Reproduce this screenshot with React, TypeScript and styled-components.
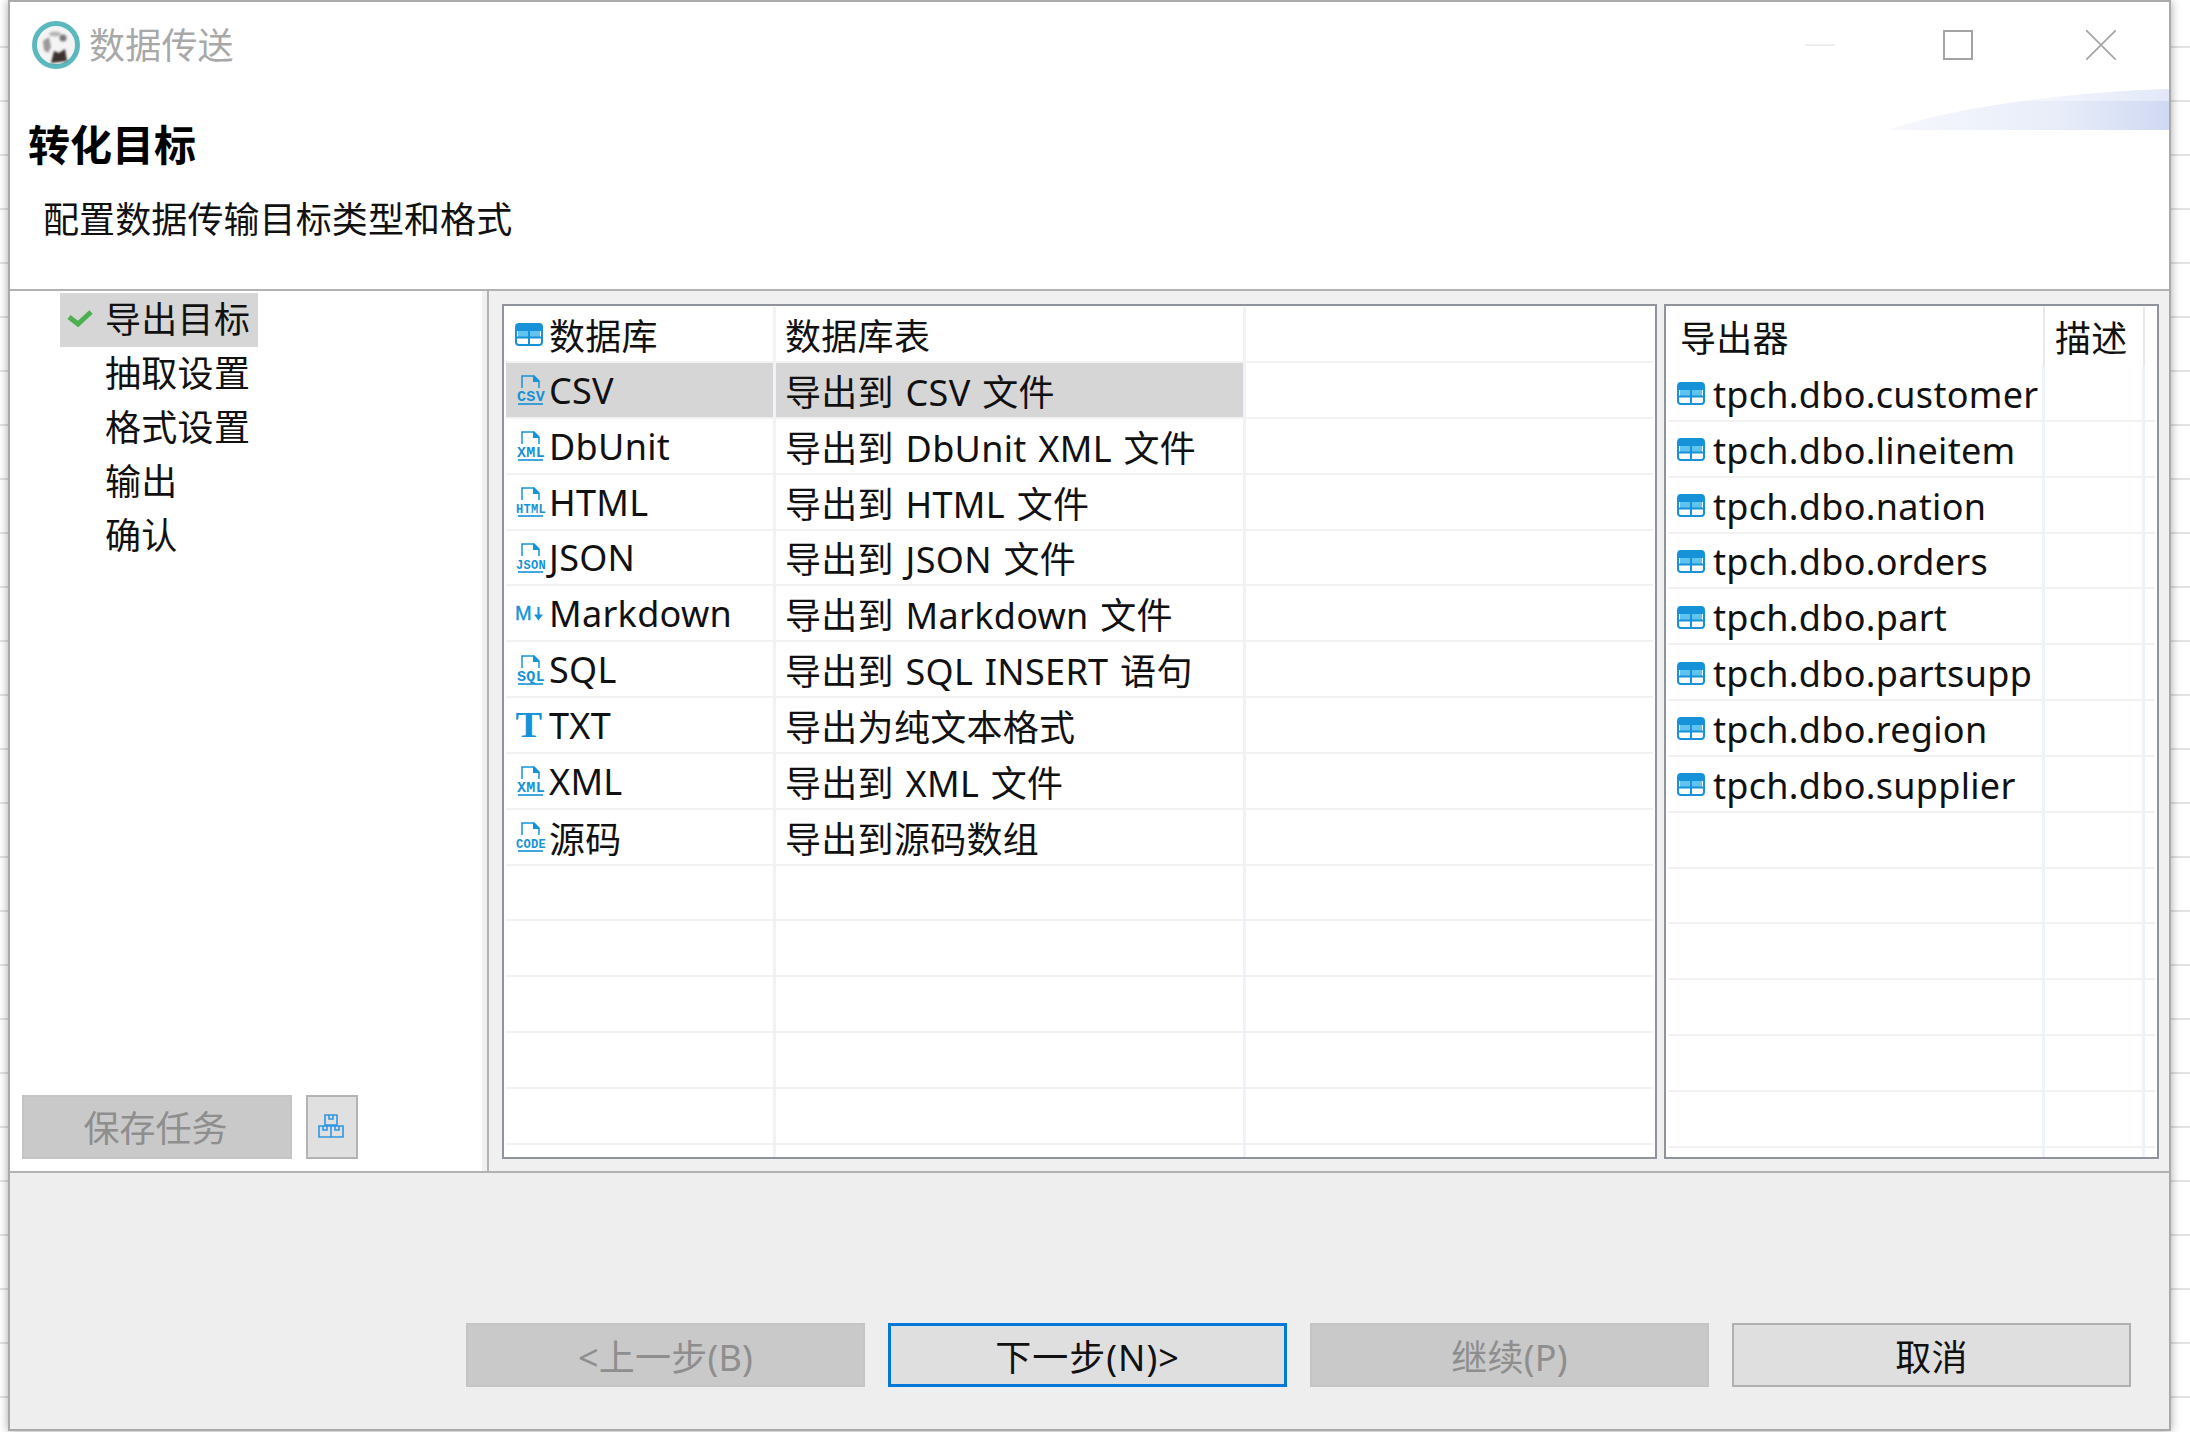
import React from "react";
import styled, { createGlobalStyle } from "styled-components";

const FONT = `"Noto Sans", "Noto Sans CJK SC", sans-serif`;
const BLUE = "#1592d8";

const formats = [
    { icon: "CSV", name: "CSV", desc: "导出到 CSV 文件", selected: true },
    { icon: "XML", name: "DbUnit", desc: "导出到 DbUnit XML 文件" },
    { icon: "HTML", name: "HTML", desc: "导出到 HTML 文件" },
    { icon: "JSON", name: "JSON", desc: "导出到 JSON 文件" },
    { icon: "MD", name: "Markdown", desc: "导出到 Markdown 文件" },
    { icon: "SQL", name: "SQL", desc: "导出到 SQL INSERT 语句" },
    { icon: "TXT", name: "TXT", desc: "导出为纯文本格式" },
    { icon: "XML", name: "XML", desc: "导出到 XML 文件" },
    { icon: "CODE", name: "源码", desc: "导出到源码数组" },
];

const tables = [
    "tpch.dbo.customer",
    "tpch.dbo.lineitem",
    "tpch.dbo.nation",
    "tpch.dbo.orders",
    "tpch.dbo.part",
    "tpch.dbo.partsupp",
    "tpch.dbo.region",
    "tpch.dbo.supplier",
];

const steps = ["导出目标", "抽取设置", "格式设置", "输出", "确认"];

const TableIcon = () => (
    <svg width="28" height="24" viewBox="0 0 28 24">
        <rect x="1" y="1" width="26" height="21" rx="3" fill="#fff" stroke={BLUE} strokeWidth="2" />
        <path d="M1 8V4a3 3 0 0 1 3-3h20a3 3 0 0 1 3 3v4z" fill={BLUE} />
        <rect x="3" y="8" width="10" height="6" fill="#63c3ef" />
        <rect x="15" y="8" width="10" height="6" fill="#63c3ef" />
        <path d="M14 8v14M1 14.5h26" stroke={BLUE} strokeWidth="2" />
    </svg>
);

const FileIcon = ({ label }: { label: string }) => (
    <svg width="32" height="32" viewBox="0 0 32 32">
        <path d="M7 14V2h12l5 5v7" fill="none" stroke={BLUE} strokeWidth="1.5" />
        <path d="M18 1l7 7h-7z" fill={BLUE} />
        <text
            x="16"
            y="26.5"
            textAnchor="middle"
            fontFamily="'Liberation Mono', monospace"
            fontWeight="700"
            fontSize={label.length > 3 ? 13 : 15}
            fill={BLUE}
            textLength={label.length > 3 ? 30 : 28}
            lengthAdjust="spacingAndGlyphs"
        >
            {label}
        </text>
        <path d="M3 30h25" stroke={BLUE} strokeWidth="1.6" />
    </svg>
);

const MarkdownIcon = () => (
    <svg width="32" height="24" viewBox="0 0 32 24">
        <text
            x="0"
            y="18"
            fontFamily="'Liberation Sans', sans-serif"
            fontSize="20"
            fill={BLUE}
            stroke={BLUE}
            strokeWidth="0.4"
        >
            M
        </text>
        <path d="M23.5 5v9" stroke={BLUE} strokeWidth="2" />
        <path d="M19 12.5h9l-4.5 6z" fill={BLUE} />
    </svg>
);

const TextIcon = () => (
    <svg width="32" height="42" viewBox="0 0 32 42">
        <text
            x="14"
            y="33"
            textAnchor="middle"
            fontFamily="'Liberation Serif', serif"
            fontWeight="700"
            fontSize="36"
            fill={BLUE}
            textLength="27"
            lengthAdjust="spacingAndGlyphs"
        >
            T
        </text>
    </svg>
);

const FormatIcon = ({ kind }: { kind: string }) => {
    if (kind === "MD") return <MarkdownIcon />;
    if (kind === "TXT") return <TextIcon />;
    return <FileIcon label={kind} />;
};

const Logo = () => (
    <svg width="48" height="48" viewBox="0 0 48 48">
        <defs>
            <filter id="soft">
                <feGaussianBlur stdDeviation="1.2" />
            </filter>
        </defs>
        <circle cx="24" cy="24" r="21.5" fill="#f4f4f4" stroke="#5bb9bd" strokeWidth="5" />
        <g filter="url(#soft)">
            <path d="M19 42l3-12 5 2 6-4 2 12z" fill="#3a302d" />
            <path d="M11 20l6-4 2 10-3 6-4-3z" fill="#9a9a9a" />
            <circle cx="31" cy="17" r="3.5" fill="#777" />
            <ellipse cx="23" cy="13" rx="6" ry="2.5" fill="#b5b5b5" />
        </g>
    </svg>
);

const Check = () => (
    <svg width="26" height="18" viewBox="0 0 26 18">
        <path d="M2 8l9 7L24 3" fill="none" stroke="#4caf50" strokeWidth="5" />
    </svg>
);

const Boxes = () => (
    <svg width="26" height="24" viewBox="0 0 26 24" fill="none" stroke="#2f97e0" strokeWidth="1.6">
        <path d="M7 1h12v10H7zM11 1v4h4V1M1 12h12v11H1zM13 12h12v11H13zM5 12v4h4v-4M17 12v4h4v-4" />
    </svg>
);

const App: React.FC = () => (
    <>
        <GlobalStyle />
        <Window>
            <Header>
                <TitleBar>
                    <Logo />
                    <WindowTitle>数据传送</WindowTitle>
                    <Controls>
                        <Minimize />
                        <Maximize />
                        <Close viewBox="0 0 30 30">
                            <path d="M0 0l30 30M30 0L0 30" stroke="#a3a3a3" strokeWidth="1.6" />
                        </Close>
                    </Controls>
                </TitleBar>
                <Heading>转化目标</Heading>
                <Description>配置数据传输目标类型和格式</Description>
                <Swoosh width="280" height="41" viewBox="0 0 280 41">
                    <defs>
                        <linearGradient id="swoosh" x1="0" x2="1" y1="0" y2="0">
                            <stop offset="0" stopColor="#f6f8fd" />
                            <stop offset="0.6" stopColor="#e8edf9" />
                            <stop offset="1" stopColor="#cfd9f3" />
                        </linearGradient>
                        <clipPath id="swooshEdge">
                            <path d="M0 41C50 22 160 4 280 0v41z" />
                        </clipPath>
                    </defs>
                    <path d="M0 41C50 22 160 4 280 0v41z" fill="url(#swoosh)" />
                    <rect x="120" y="0" width="160" height="12" fill="#fff" opacity="0.4" clipPath="url(#swooshEdge)" />
                </Swoosh>
            </Header>
            <Body>
                <Sidebar>
                    <StepList>
                        {steps.map((step, i) => (
                            <StepItem key={step} $active={i === 0}>
                                <StepMark>{i === 0 && <Check />}</StepMark>
                                {step}
                            </StepItem>
                        ))}
                    </StepList>
                    <SidebarActions>
                        <SaveButton disabled>保存任务</SaveButton>
                        <IconButton>
                            <Boxes />
                        </IconButton>
                    </SidebarActions>
                </Sidebar>
                <Content>
                    <TablePanel $width={1155}>
                        <HeadRow $columns="270px 470px 1fr" $height={56}>
                            <Cell>
                                <IconSlot $width={43}>
                                    <TableIcon />
                                </IconSlot>
                                数据库
                            </Cell>
                            <Cell $inset={9}>数据库表</Cell>
                            <Cell />
                        </HeadRow>
                        {formats.map((f) => (
                            <Row key={f.name} $columns="270px 470px 1fr" $selected={f.selected}>
                                <Cell>
                                    <IconSlot $width={43}>
                                        <FormatIcon kind={f.icon} />
                                    </IconSlot>
                                    {f.name}
                                </Cell>
                                <Cell $inset={9}>{f.desc}</Cell>
                                <Cell />
                            </Row>
                        ))}
                        {Array.from({ length: 5 }, (_, i) => (
                            <Row key={i} $columns="270px 470px 1fr">
                                <Cell />
                                <Cell />
                                <Cell />
                            </Row>
                        ))}
                        <Filler $columns="270px 470px 1fr">
                            <Cell />
                            <Cell />
                            <Cell />
                        </Filler>
                    </TablePanel>
                    <TablePanel $width={495}>
                        <HeadRow $columns="377px 100px 1fr" $height={59} $plain>
                            <Cell $inset={12}>导出器</Cell>
                            <Cell $inset={10}>描述</Cell>
                            <Cell />
                        </HeadRow>
                        {tables.map((t) => (
                            <Row key={t} $columns="377px 100px 1fr" $textDrop={3}>
                                <Cell>
                                    <IconSlot $width={45}>
                                        <TableIcon />
                                    </IconSlot>
                                    {t}
                                </Cell>
                                <Cell />
                                <Cell />
                            </Row>
                        ))}
                        {Array.from({ length: 6 }, (_, i) => (
                            <Row key={i} $columns="377px 100px 1fr">
                                <Cell />
                                <Cell />
                                <Cell />
                            </Row>
                        ))}
                        <Filler $columns="377px 100px 1fr">
                            <Cell />
                            <Cell />
                            <Cell />
                        </Filler>
                    </TablePanel>
                </Content>
            </Body>
            <Footer>
                <WizardButton disabled>&lt;上一步(B)</WizardButton>
                <WizardButton $primary>下一步(N)&gt;</WizardButton>
                <WizardButton disabled>继续(P)</WizardButton>
                <WizardButton>取消</WizardButton>
            </Footer>
        </Window>
    </>
);

export default App;

// Styled Components
const GlobalStyle = createGlobalStyle`
    html, body {
        margin: 0;
        padding: 0;
        height: 1432px;
        overflow: hidden;
    }
    body {
        font-family: ${FONT};
        color: #111;
        background: repeating-linear-gradient(
            to bottom,
            #fff 0,
            #fff 46px,
            #e2e2e2 46px,
            #e2e2e2 48px,
            #fff 48px,
            #fff 54px
        );
    }
`;

const Window = styled.div`
    box-sizing: border-box;
    width: 2163px;
    height: 1431px;
    margin-left: 8px;
    border: 2px solid #aaaaaa;
    background: #fff;
    box-shadow: 0 0 9px rgba(0, 0, 0, 0.35);
    display: flex;
    flex-direction: column;
`;

const Header = styled.header`
    position: relative;
    height: 287px;
    flex: none;
    box-sizing: border-box;
    background: #fff;
`;

const TitleBar = styled.div`
    display: flex;
    align-items: center;
    height: 86px;
    padding: 0 53px 0 22px;
`;

const WindowTitle = styled.span`
    margin: 2px 0 0 9px;
    font-size: 36px;
    line-height: 46px;
    letter-spacing: 0.2px;
    color: #a8a8a8;
`;

const Controls = styled.div`
    margin-left: auto;
    display: flex;
    align-items: center;
    gap: 108px;
`;

const Minimize = styled.div`
    width: 30px;
    height: 2px;
    background: #efefef;
`;

const Maximize = styled.div`
    box-sizing: border-box;
    width: 30px;
    height: 30px;
    border: 2px solid #a3a3a3;
`;

const Close = styled.svg`
    width: 30px;
    height: 30px;
    margin-left: 5px;
`;

const Heading = styled.h1`
    margin: 29px 0 0 18px;
    font-size: 42px;
    line-height: 56px;
    font-weight: 700;
    color: #000;
`;

const Description = styled.p`
    margin: 21px 0 0 33px;
    font-size: 36px;
    line-height: 52px;
    letter-spacing: 0.1px;
    color: #111;
`;

const Swoosh = styled.svg`
    position: absolute;
    top: 87px;
    right: 0;
`;

const Body = styled.div`
    height: 882px;
    flex: none;
    box-sizing: border-box;
    display: flex;
    border-top: 2px solid #b2b2b2;
    background: #f0f0f0;
`;

const Sidebar = styled.aside`
    box-sizing: border-box;
    width: 472px;
    flex: none;
    background: #fff;
    display: flex;
    flex-direction: column;
    padding: 2px 0 12px 12px;
    margin-right: 5px;
`;

const StepList = styled.div`
    display: flex;
    flex-direction: column;
    padding-left: 38px;
`;

const StepItem = styled.div<{ $active?: boolean }>`
    box-sizing: border-box;
    display: flex;
    align-items: center;
    width: 198px;
    height: 54px;
    padding-bottom: 5px;
    font-size: 36px;
    letter-spacing: 0.3px;
    color: #111;
    background: ${({ $active }) => ($active ? "#d6d6d6" : "transparent")};
`;

const StepMark = styled.span`
    box-sizing: border-box;
    width: 45px;
    flex: none;
    display: flex;
    justify-content: center;
    padding-right: 5px;
`;

const SidebarActions = styled.div`
    margin-top: auto;
    display: flex;
    gap: 14px;
`;

const SaveButton = styled.button`
    box-sizing: border-box;
    width: 270px;
    height: 64px;
    padding: 0 3px 2px 0;
    border: 2px solid #c4c4c4;
    background: #c9c9c9;
    color: #8e8e8e;
    font-family: ${FONT};
    font-size: 36px;
`;

const IconButton = styled.button`
    box-sizing: border-box;
    width: 52px;
    height: 64px;
    padding: 0 2px 2px 0;
    border: 2px solid #b4b4b4;
    background: #e0e0e0;
    display: flex;
    align-items: center;
    justify-content: center;
`;

const Content = styled.main`
    flex: 1;
    min-width: 0;
    box-sizing: border-box;
    display: flex;
    gap: 7px;
    padding: 13px 10px 12px 13px;
    border-left: 2px solid #b2b2b2;
`;

const TablePanel = styled.section<{ $width: number }>`
    box-sizing: border-box;
    width: ${({ $width }) => $width}px;
    flex: none;
    background: #fff;
    border: 2px solid #8f939c;
    padding: 1px 2px 2px;
    overflow: hidden;
`;

const Cell = styled.div<{ $inset?: number }>`
    box-sizing: border-box;
    min-width: 0;
    display: flex;
    align-items: center;
    font-size: 36px;
    letter-spacing: 0.3px;
    word-spacing: 2px;
    white-space: nowrap;
    overflow: hidden;
    color: #111;
    padding-left: ${({ $inset }) => $inset ?? 0}px;
    border-right: 3px solid #eef3f9;

    &:last-child {
        border-right: none;
    }
`;

const IconSlot = styled.span<{ $width: number }>`
    box-sizing: border-box;
    width: ${({ $width }) => $width}px;
    flex: none;
    display: flex;
    padding-left: 9px;
`;

const Row = styled.div<{ $columns: string; $selected?: boolean; $textDrop?: number }>`
    box-sizing: border-box;
    display: grid;
    grid-template-columns: ${({ $columns }) => $columns};
    height: 55.85px;
    border-bottom: 2px solid #f2f2f2;

    ${Cell} {
        padding-top: ${({ $textDrop }) => $textDrop ?? 1}px;
    }
    ${Cell}:not(:last-child) {
        background: ${({ $selected }) => ($selected ? "#d6d6d6" : "transparent")};
    }
`;

const HeadRow = styled(Row)<{ $height: number; $plain?: boolean }>`
    height: ${({ $height }) => $height}px;
    border-bottom: ${({ $plain }) => ($plain ? "none" : "2px solid #f2f2f2")};

    ${Cell} {
        padding-top: ${({ $plain }) => ($plain ? "0" : "1px")};
        border-right-width: ${({ $plain }) => ($plain ? "2px" : "3px")};
        border-right-color: ${({ $plain }) => ($plain ? "#e8e8e8" : "#eef3f9")};
    }
    ${Cell}:last-child {
        border-right: none;
    }
`;

const Filler = styled(Row)`
    height: 12px;
    border-bottom: none;
`;

const Footer = styled.footer`
    flex: 1;
    box-sizing: border-box;
    display: flex;
    justify-content: flex-end;
    align-items: flex-end;
    gap: 23px;
    padding: 0 38px 42px 0;
    background: #eeeeee;
    border-top: 2px solid #b2b2b2;
`;

const WizardButton = styled.button<{ $primary?: boolean }>`
    box-sizing: border-box;
    width: 399px;
    height: 64px;
    padding: 0;
    font-family: ${FONT};
    font-size: 36px;
    letter-spacing: ${({ $primary }) => ($primary ? "1px" : "0.2px")};
    color: #111;
    background: #dfdfdf;
    border: ${({ $primary }) => ($primary ? "3px solid #0078d7" : "2px solid #b0b0b0")};

    &:disabled {
        background: #c9c9c9;
        border-color: #c4c4c4;
        color: #8e8e8e;
    }
`;
